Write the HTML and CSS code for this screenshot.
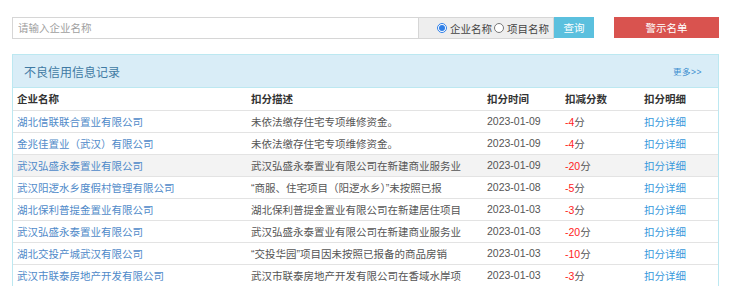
FILE: index.html
```html
<!DOCTYPE html>
<html lang="zh-CN">
<head>
  <meta charset="UTF-8" />
  <meta name="viewport" content="width=device-width, initial-scale=1.0" />
  <title>不良信用信息记录</title>
  <link rel="stylesheet" href="styles.css">
</head>
<body>
  <div class="page">
    <form class="search-bar" onsubmit="return false;">
      <div class="search-group">
        <input class="search-input" type="text" placeholder="请输入企业名称" />
        <div class="search-type">
          <label><input type="radio" name="type" checked />企业名称</label>
          <label><input type="radio" name="type" />项目名称</label>
        </div>
        <button class="btn-query" type="submit">查询</button>
      </div>
      <a class="btn-warn" href="#">警示名单</a>
    </form>

    <div class="panel">
      <div class="panel-heading">
        <span class="panel-title">不良信用信息记录</span>
        <a class="more" href="#">更多&gt;&gt;</a>
      </div>
      <table class="record-table">
        <colgroup>
          <col class="c-name"><col class="c-desc"><col class="c-date"><col class="c-score"><col class="c-detail">
        </colgroup>
        <thead>
          <tr><th>企业名称</th><th>扣分描述</th><th>扣分时间</th><th>扣减分数</th><th>扣分明细</th></tr>
        </thead>
        <tbody>
          <tr><td><a href="#">湖北信联联合置业有限公司</a></td><td>未依法缴存住宅专项维修资金。</td><td>2023-01-09</td><td><span class="minus">-4</span>分</td><td><a class="detail" href="#">扣分详细</a></td></tr>
          <tr><td><a href="#">金兆佳置业（武汉）有限公司</a></td><td>未依法缴存住宅专项维修资金。</td><td>2023-01-09</td><td><span class="minus">-4</span>分</td><td><a class="detail" href="#">扣分详细</a></td></tr>
          <tr class="active"><td><a href="#">武汉弘盛永泰置业有限公司</a></td><td>武汉弘盛永泰置业有限公司在新建商业服务业</td><td>2023-01-09</td><td><span class="minus">-20</span>分</td><td><a class="detail" href="#">扣分详细</a></td></tr>
          <tr><td><a href="#">武汉阳逻水乡度假村管理有限公司</a></td><td>“商服、住宅项目（阳逻水乡）”未按照已报</td><td>2023-01-08</td><td><span class="minus">-5</span>分</td><td><a class="detail" href="#">扣分详细</a></td></tr>
          <tr><td><a href="#">湖北保利普提金置业有限公司</a></td><td>湖北保利普提金置业有限公司在新建居住项目</td><td>2023-01-03</td><td><span class="minus">-3</span>分</td><td><a class="detail" href="#">扣分详细</a></td></tr>
          <tr><td><a href="#">武汉弘盛永泰置业有限公司</a></td><td>武汉弘盛永泰置业有限公司在新建商业服务业</td><td>2023-01-03</td><td><span class="minus">-20</span>分</td><td><a class="detail" href="#">扣分详细</a></td></tr>
          <tr><td><a href="#">湖北交投产城武汉有限公司</a></td><td>“交投华园”项目因未按照已报备的商品房销</td><td>2023-01-03</td><td><span class="minus">-10</span>分</td><td><a class="detail" href="#">扣分详细</a></td></tr>
          <tr><td><a href="#">武汉市联泰房地产开发有限公司</a></td><td>武汉市联泰房地产开发有限公司在香域水岸项</td><td>2023-01-03</td><td><span class="minus">-3</span>分</td><td><a class="detail" href="#">扣分详细</a></td></tr>
        </tbody>
      </table>
    </div>
  </div>
</body>
</html>
```

FILE: styles.css
```css
:root {
  --font-family: "Liberation Sans", "Noto Sans CJK SC", sans-serif;
  --text: #555;
  --text-dark: #333;
  --link: #4f8ac9;
  --link-detail: #3598dc;
  --line: #e3e3e3;
  --info-bg: #d9edf7;
  --info-border: #bce8f1;
}

* { box-sizing: border-box; margin: 0; padding: 0; }

body {
  font-family: var(--font-family);
  font-size: 10.5px;
  color: var(--text);
  background: #fff;
}

a { text-decoration: none; }

.page {
  width: 719px;
  padding: 17px 0 0 12px;
}

/* search bar */
.search-bar {
  display: flex;
  align-items: stretch;
  gap: 20px;
  height: 22px;
}

.search-group { display: flex; }

.search-input {
  width: 406px;
  height: 22px;
  padding: 0 5px;
  border: 1px solid #d6d6d6;
  border-right: none;
  font-family: var(--font-family);
  font-size: 10.5px;
  color: var(--text);
  outline: none;
}
.search-input::placeholder { color: #a0a0a0; }

.search-type {
  width: 136px;
  display: flex;
  justify-content: flex-end;
  align-items: center;
  padding-right: 4px;
  background: #eee;
  border: 1px solid #d6d6d6;
  color: #444;
  font-size: 10.5px;
}
.search-type label { display: flex; align-items: center; }
.search-type input {
  width: 10px;
  height: 10px;
  margin: 0 3px 0 2px;
  accent-color: #2f7fe6;
}

.btn-query {
  width: 40px;
  height: 21px;
  border: none;
  background: #5bc0de;
  color: #fff;
  font-family: var(--font-family);
  font-size: 10.5px;
  cursor: pointer;
}

.btn-warn {
  width: 105px;
  height: 21px;
  display: flex;
  justify-content: center;
  align-items: center;
  background: #d9534f;
  color: #fff;
  font-size: 10.5px;
}

/* panel */
.panel {
  margin-top: 15px;
  width: 707px;
  border: 1px solid var(--info-border);
  border-bottom: none;
}

.panel-heading {
  height: 33px;
  display: flex;
  justify-content: space-between;
  align-items: center;
  padding: 0 16px 0 11px;
  background: var(--info-bg);
  border-bottom: 1px solid var(--info-border);
}

.panel-title {
  font-size: 12px;
  color: #3f7aa3;
}

.more {
  font-size: 8.5px;
  color: #3c8fd0;
  letter-spacing: 0.5px;
}

.record-table {
  width: 100%;
  border-collapse: collapse;
  table-layout: fixed;
}
.c-name { width: 234px; }
.c-desc { width: 236px; }
.c-date { width: 78px; }
.c-score { width: 79px; }

.record-table th,
.record-table td {
  text-align: left;
  padding: 0 4px;
  white-space: nowrap;
  overflow: hidden;
}

.record-table th {
  height: 22px;
  font-weight: 700;
  color: var(--text-dark);
}

.record-table td {
  height: 22px;
  border-top: 1px solid var(--line);
}

.record-table tr.active td { background: #f3f3f3; }

.record-table td a { color: var(--link); }
.record-table td a.detail { color: var(--link-detail); }

.minus { color: #f22; }
```
